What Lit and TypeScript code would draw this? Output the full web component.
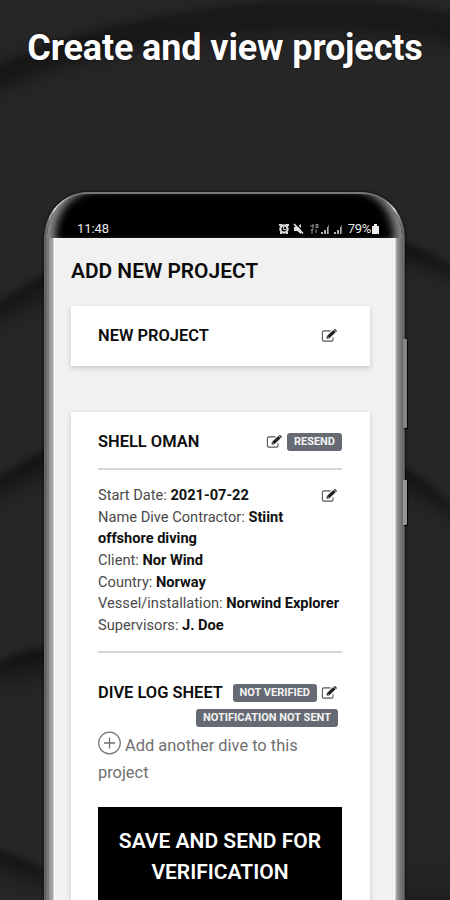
import { LitElement, html, svg, css } from "lit";
import { customElement, property } from "lit/decorators.js";

@customElement("edit-icon")
class EditIcon extends LitElement {
  static styles = css`
    :host { display: block; width: 16px; height: 14px; flex: none; }
    svg { display: block; }
  `;
  render() {
    return html`<svg width="16" height="14" viewBox="0 0 16 14">
      <path d="M9.500 1.900H2.700a1.300 1.300 0 0 0-1.300 1.300v7.600a1.300 1.300 0 0 0 1.300 1.300h8a1.300 1.300 0 0 0 1.300-1.300V8.300" fill="none" stroke="#555" stroke-width="1.100"/>
      <path d="M5.700 9.600V7.300L12.300 1l2.400 2.300-6.600 6.300z" fill="#222"/>
      <path d="M12.800.6l.5-.4q.5-.4 1 0l1.300 1.300q.4.5 0 1l-.5.4z" fill="#222"/>
      <path d="M6.500 7.700l1.300 1.200" stroke="#fff" stroke-width=".7"/>
    </svg>`;
  }
}

@customElement("detail-row")
class DetailRow extends LitElement {
  @property() label = "";
  @property() value = "";
  static styles = css`
    :host { display: block; color: #4a4a4a; }
    b { color: #111; font-weight: 700; letter-spacing: -0.04px; }
  `;
  render() {
    return html`${this.label}: <b>${this.value}</b>`;
  }
}

@customElement("app-root")
class AppRoot extends LitElement {
  static styles = css`
    :host { display: block; position: relative; width: 450px; height: 900px; overflow: hidden; background: #262626; font-family: Roboto, "Liberation Sans", sans-serif; color: #0c0c0c; }
    * { box-sizing: border-box; }
    .waves { position: absolute; inset: 0; }
    .page { position: relative; display: flex; flex-direction: column; height: 900px; }
    h1 { margin: 0; height: 192px; padding-top: 25px; text-align: center; font-size: 36px; letter-spacing: -0.12px; line-height: 46px; font-weight: 700; color: #fff; white-space: nowrap; text-shadow: 0 0 2px #000; }
    .phone { position: relative; width: 361px; height: 708px; margin-left: 44px; padding: 2px 10px 0; border-radius: 44px 44px 0 0 / 46px 46px 0 0;
      background: linear-gradient(90deg, #777 0, #5a5a5a 1.5px, #808080 3px, #6c6c6c 4px, #a0a0a0 6px, #999 8px, #ddd 10px, #777 30px, #777 340px, #ddd 351px, #999 353px, #858585 355px, #6c6c6c 358px, #666 360px, #444 361px); box-shadow: 0 0 3px #000; }
    .key { position: absolute; left: 359px; width: 4px; border-radius: 0 1px 1px 0; background: #858585; box-shadow: 1px 1px 1px #000; }
    .volume { top: 147px; height: 89px; }
    .power { top: 288px; height: 45px; background: #96969a; }
    .status { height: 44px; margin: 0 -7px; padding: 27px 23px 0 30px; display: flex; justify-content: space-between; border-radius: 40px 40px 0 0 / 42px 42px 0 0; color: #e8e8e8; font-size: 13px; line-height: 16px;
      background: #000; box-shadow: inset 14px 0 9px -6px #8c8c8c, inset -14px 0 9px -6px #858585; }
    .time { letter-spacing: -0.1px; }
    .indicators { display: flex; align-items: center; gap: 1px; height: 16px; }
    .percent { margin-left: 1px; letter-spacing: -0.3px; }
    .screen { height: 662px; padding: 0 25px 0 17px; background: #f1f1f1; overflow: hidden; border-left: 1px solid #fff; border-right: 1px solid #fff; }
    h2 { margin: 0 0 0 -1px; padding: 20px 0 0; height: 68px; font-size: 20.9px; line-height: 26px; font-weight: 600; white-space: nowrap; }
    .card { background: #fff; width: 299px; padding: 0 28px 0 27px; box-shadow: 0 2px 5px rgba(0,0,0,.18); margin-left: -1px; }
    .head { display: flex; align-items: center; height: 60px; padding-right: 5px; }
    h3 { margin: 0; flex: 1; font-size: 16.45px; line-height: 20px; font-weight: 600; white-space: nowrap; }
    .project { margin-top: 46px; height: 520px; }
    .project .head { height: 56px; padding: 3px 0 0; }
    .tag { display: block; height: 18px; padding: 0 7px; border-radius: 3px; background: #656a73; color: #f4f4f4; font-size: 11px; line-height: 18px; font-weight: 700; white-space: nowrap; }
    .head .tag { margin-left: 5px; }
    .rule { height: 2px; background: #d6d6d6; }
    .details { display: flex; justify-content: space-between; align-items: flex-start; height: 181px; padding: 15px 5px 0 0; font-size: 14.65px; line-height: 21.65px; }
    .fields { width: 222px; flex: none; white-space: nowrap; }
    .wrap { white-space: normal; }
    .details edit-icon { margin-top: 4px; }
    .sheet { display: flex; align-items: center; height: 21px; margin-top: 29px; padding-right: 5px; }
    .sheet .tag { margin-right: 4px; }
    .notice { display: flex; justify-content: flex-end; margin-top: 6px; padding-right: 4px; }
    .add { margin-top: 4px; color: #707070; font-size: 16.4px; line-height: 27px; }
    .add svg { vertical-align: -4px; }
    .save { margin-top: 21px; height: 110px; padding-top: 19px; background: #000; color: #fff; font-size: 21px; line-height: 31px; font-weight: 600; text-align: center; white-space: nowrap; }
  `;

  private wave(id: string, d: string, x1: number, y1: number, x2: number, y2: number) {
    return svg`<linearGradient id=${id} gradientUnits="userSpaceOnUse" x1=${x1} x2=${x2} y1=${y1} y2=${y2}>
        <stop offset="0" stop-color="#101010" stop-opacity=".9"/><stop offset=".4" stop-color="#151515" stop-opacity=".65"/><stop offset="1" stop-color="#262626" stop-opacity="0"/>
      </linearGradient><path d=${d} fill="url(#${id})" filter="url(#soft)"/>`;
  }

  render() {
    return html`
      <svg class="waves" width="450" height="900" viewBox="0 0 450 900">
        <filter id="soft" color-interpolation-filters="sRGB" x="-20%" y="-40%" width="140%" height="180%"><feGaussianBlur stdDeviation="3"/></filter>
        <filter id="wide" color-interpolation-filters="sRGB" x="-20%" y="-60%" width="140%" height="220%"><feGaussianBlur stdDeviation="8"/></filter>
        <path d="M-20 88C60 46 170 26 290 20C350 18 410 21 470 36" fill="none" stroke="#121212" stroke-width="22" opacity=".75" filter="url(#wide)"/>
        <path d="M-20 80C60 40 170 11 290 5C350 2 410 8 470 22" fill="none" stroke="#101010" stroke-width="7" opacity=".5" filter="url(#soft)"/>
        ${this.wave("w1", "M-10 308L50 270V340H-10z", 22, 286, 40, 320)}
        ${this.wave("w2", "M-10 481L50 447V520H-10z", 22, 463, 38, 500)}
        ${this.wave("w3", "M-10 668Q18 648 50 648V720H-10z", 22, 652, 30, 700)}
        ${this.wave("w4", "M-10 848Q20 855 50 873V930H-10z", 22, 856, 10, 895)}
        ${this.wave("w5", "M398 240Q430 250 460 270V320H398z", 430, 252, 420, 285)}
        ${this.wave("w6", "M398 464Q430 480 460 513V560H398z", 430, 482, 412, 514)}
        ${this.wave("w7", "M398 850L460 850V950H398z", 430, 960, 430, 850)}
      </svg>
      <div class="page">
        <h1>Create and view projects</h1>
        <div class="phone">
          <div class="key volume"></div>
          <div class="key power"></div>
          <div class="status">
            <span class="time">11:48</span>
            <span class="indicators">
              <svg width="68" height="14" viewBox="0 0 68 14" fill="#ddd">
                <path d="M1 2h3v2H1zM8 2h3v2H8zM2 10h2v2H2zM8 10h2v2H8z"/>
                <circle cx="6" cy="7" r="3.600" fill="none" stroke="#ddd" stroke-width="2.200"/><path d="M5.600 4.500v3H8" fill="none" stroke="#ddd"/>
                <path d="M16 5h3l4-3v10l-4-3h-3z"/><path d="M17 1l9 9" stroke="#000" stroke-width="1.200"/><path d="M16 2l9 9.500" stroke="#eee" stroke-width="1.500"/>
                <path d="M32 4h4M35 2v5M38 2.500h2v3H38zM34 12V7M33 8.500l1-1.500 1 1.500M38 7v4" fill="none" stroke="#999"/>
                <path d="M43 10h2v2h-2zM46 8h2v4h-2zM49 5h1v7h-1z" opacity=".8"/><path d="M50 3h1v9h-1z" opacity=".5"/>
                <path d="M56 10h2v2h-2zM59 8h2v4h-2zM62 5h1v7h-1z" opacity=".8"/><path d="M63 3h1v9h-1z" opacity=".5"/>
              </svg>
              <span class="percent">79%</span>
              <svg width="7" height="12" viewBox="0 0 7 12"><path d="M0 3h2V1h3v2h2v8H0z" fill="#eee"/></svg>
            </span>
          </div>
          <div class="screen">
            <h2>ADD NEW PROJECT</h2>
            <div class="card"><div class="head"><h3>NEW PROJECT</h3><edit-icon></edit-icon></div></div>
            <div class="card project">
              <div class="head"><h3>SHELL OMAN</h3><edit-icon></edit-icon><span class="tag">RESEND</span></div>
              <div class="rule"></div>
              <div class="details">
                <div class="fields">
                  <detail-row label="Start Date" value="2021-07-22"></detail-row>
                  <detail-row class="wrap" label="Name Dive Contractor" value="Stiint offshore diving"></detail-row>
                  <detail-row label="Client" value="Nor Wind"></detail-row>
                  <detail-row label="Country" value="Norway"></detail-row>
                  <detail-row label="Vessel/installation" value="Norwind Explorer"></detail-row>
                  <detail-row label="Supervisors" value="J. Doe"></detail-row>
                </div>
                <edit-icon></edit-icon>
              </div>
              <div class="rule"></div>
              <div class="sheet"><h3>DIVE LOG SHEET</h3><span class="tag">NOT VERIFIED</span><edit-icon></edit-icon></div>
              <div class="notice"><span class="tag">NOTIFICATION NOT SENT</span></div>
              <div class="add"><svg width="23" height="24" viewBox="0 0 23 24" fill="none" stroke="#707070"><circle cx="11.500" cy="12" r="10.800" stroke-width="1.200"/><path d="M6 12h11M11.500 6.500v11" stroke-width="1.300"/></svg> Add another dive to this project</div>
              <div class="save">SAVE AND SEND FOR<br>VERIFICATION</div>
            </div>
          </div>
        </div>
      </div>`;
  }
}
